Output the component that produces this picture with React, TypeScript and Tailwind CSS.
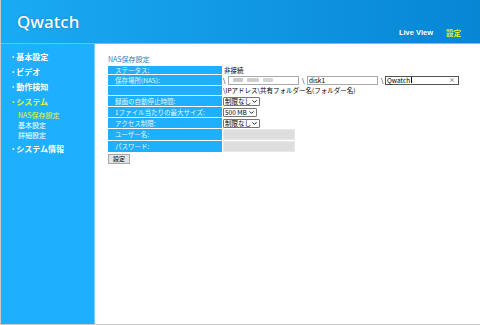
import { ChevronDown } from "lucide-react";

const jp = "font-['Noto_Sans_CJK_JP','Noto_Sans',sans-serif]";

type Row = { label: string; h: string; value: React.ReactNode };

function Select({ text, w }: { text: string; w: string }) {
  return (
    <div
      className={`flex h-[9px] ${w} items-center justify-between overflow-hidden whitespace-nowrap rounded-[1px] border border-[#767676] bg-white pl-[1px] pr-[1px] text-[6.5px] leading-none text-black`}
    >
      <span className="whitespace-nowrap">{text}</span>
      <ChevronDown className="h-[7px] w-[7px] shrink-0" strokeWidth={3} />
    </div>
  );
}

function PathInputs() {
  return (
    <div className="flex h-full items-center whitespace-nowrap text-[6.5px] leading-none text-black">
      <span className="w-[5px]">\</span>
      <div className="flex h-[9px] w-[71px] items-center gap-[4px] border border-[#a9a9a9] bg-white px-[4px]">
        <div className="h-[4px] w-[10px] rounded-[1px] bg-[#c9c9c9] blur-[0.6px]" />
        <div className="h-[4px] w-[12px] rounded-[1px] bg-[#cfcfcf] blur-[0.6px]" />
        <div className="h-[4px] w-[10px] rounded-[1px] bg-[#d4d4d4] blur-[0.6px]" />
      </div>
      <span className="ml-[3px] w-[5px]">\</span>
      <div className="flex h-[9px] w-[71px] items-center border border-[#a9a9a9] bg-white px-[1px]">
        disk1
      </div>
      <span className="ml-[3px] w-[4px]">\</span>
      <div className="flex h-[9px] w-[74px] items-center justify-between border border-[#555] bg-white px-[1px]">
        <span className="flex items-center">
          Qwatch<span className="ml-[0.5px] h-[6px] w-[1px] bg-black" />
        </span>
        <span className="mr-[2px] text-[6px] text-[#333]">×</span>
      </div>
    </div>
  );
}

const rows: Row[] = [
  { label: "ステータス:", h: "h-[8px]", value: <span className="pl-[1px]">非接続</span> },
  { label: "保存場所(NAS):", h: "h-[10px]", value: <PathInputs /> },
  {
    label: "",
    h: "h-[9px]",
    value: <span className="whitespace-nowrap">\IPアドレス\共有フォルダー名(フォルダー名)</span>,
  },
  { label: "録画の自動停止時間:", h: "h-[10px]", value: <Select text="制限なし" w="w-[37px]" /> },
  { label: "1ファイル当たりの最大サイズ:", h: "h-[10px]", value: <Select text="500 MB" w="w-[34px]" /> },
  { label: "アクセス制限:", h: "h-[10px]", value: <Select text="制限なし" w="w-[37px]" /> },
  {
    label: "ユーザー名:",
    h: "h-[11px]",
    value: <div className="h-full w-[72px] border border-[#e8e8e8] bg-[#dedede]" />,
  },
  {
    label: "パスワード:",
    h: "h-[11px]",
    value: <div className="h-full w-[72px] border border-[#e8e8e8] bg-[#dedede]" />,
  },
];

const menu = [
  { label: "基本設定", active: false },
  { label: "ビデオ", active: false },
  { label: "動作検知", active: false },
  { label: "システム", active: true },
];

export default function App() {
  return (
    <div
      className={`flex h-[325px] w-[480px] flex-col overflow-hidden border-b border-l border-[#c8c8c8] bg-white ${jp}`}
    >
      <header className="flex h-[44px] shrink-0 items-end justify-between border-b border-[#5cc8ff] bg-gradient-to-r from-[#1aaaf4] to-[#0786d4]">
        <div className="mb-[13px] ml-[16px] font-['Noto_Sans','Liberation_Sans',sans-serif] text-[17px] font-medium leading-none text-white [text-shadow:0_0_2px_rgba(0,0,0,0.25)]">
          Qwatch
        </div>
        <nav className="mb-[7px] mr-[19px] flex items-center gap-[13px] text-[7.5px] font-bold leading-none">
          <span className="font-['Liberation_Sans',sans-serif] text-white">Live View</span>
          <span className="text-[#d6f020]">設定</span>
        </nav>
      </header>

      <div className="flex flex-1">
        <aside className="w-[94px] shrink-0 border-r border-[#6fd0ff] bg-[#1eb0fe] pl-[11px] pt-[8px] text-white">
          <ul className="flex flex-col gap-[5px] text-[8px] font-bold">
            {menu.map((m) => (
              <li
                key={m.label}
                className={`flex h-[10px] items-center leading-none ${m.active ? "text-[#e4f82a]" : ""}`}
              >
                <span className="mr-[2px] text-[6px]">•</span>
                {m.label}
              </li>
            ))}
          </ul>
          <ul className="mt-[3px] flex flex-col pl-[6px] text-[7px]">
            <li className="flex h-[10px] items-center leading-none text-[#e4f82a]">NAS保存設定</li>
            <li className="flex h-[10px] items-center leading-none">基本設定</li>
            <li className="flex h-[10px] items-center leading-none">詳細設定</li>
          </ul>
          <div className="mt-[4px] flex h-[10px] items-center text-[8px] font-bold leading-none">
            <span className="mr-[2px] text-[6px]">•</span>
            システム情報
          </div>
        </aside>

        <main className="flex-1 pl-[13px] pt-[11px]">
          <h1 className="text-[7px] leading-[8px] text-[#2c7bc6]">NAS保存設定</h1>
          <div className="mt-[3px] flex flex-col gap-[1px] text-[6.5px] leading-none">
            {rows.map((r, i) => (
              <div key={i} className={`flex ${r.h} gap-[1px]`}>
                <div className="flex w-[114px] shrink-0 items-center whitespace-nowrap bg-[#1eb0fe] pl-[7px] text-[#e3f5ff]">
                  {r.label}
                </div>
                <div className="flex items-center text-black">{r.value}</div>
              </div>
            ))}
          </div>
          <button className="mt-[2px] flex h-[10px] w-[22px] items-center justify-center border border-[#a8a8a8] bg-[#e4e4e4] text-[6px] leading-none text-black">
            設定
          </button>
        </main>
      </div>
    </div>
  );
}
